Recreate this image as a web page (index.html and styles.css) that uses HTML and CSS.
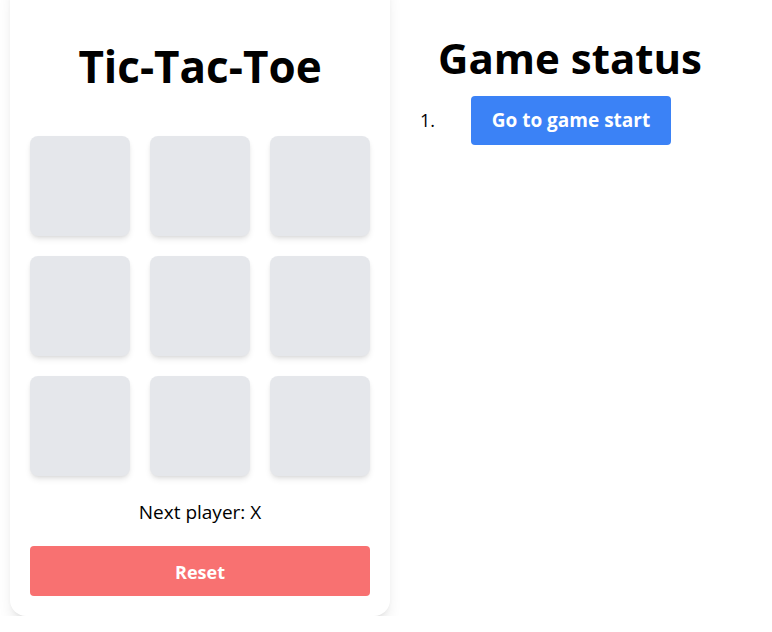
FILE: index.html
```html
<!DOCTYPE html>
<html lang="en">
<head>
<meta charset="utf-8">
<title>Tic-Tac-Toe</title>
<link rel="stylesheet" href="styles.css">
</head>
<body>
<main class="layout">
  <section class="card">
    <h1 class="title">Tic-Tac-Toe</h1>
    <div class="board">
      <button class="cell"></button>
      <button class="cell"></button>
      <button class="cell"></button>
      <button class="cell"></button>
      <button class="cell"></button>
      <button class="cell"></button>
      <button class="cell"></button>
      <button class="cell"></button>
      <button class="cell"></button>
    </div>
    <p class="status">Next player: X</p>
    <button class="reset">Reset</button>
  </section>
  <section class="history">
    <h2 class="history-title">Game status</h2>
    <ol class="moves">
      <li class="move"><button class="move-btn">Go to game start</button></li>
    </ol>
  </section>
</main>
</body>
</html>
```
FILE: styles.css
```css
* { box-sizing: border-box; }
html, body { margin: 0; padding: 0; background: #fff; }
body {
  font-family: "Open Sans", "Noto Sans", "Liberation Sans", sans-serif;
  color: #000;
  overflow: hidden;
}
.layout {
  display: flex;
  align-items: flex-start;
  gap: 20px;
  padding-left: 10px;
}
.card {
  width: 380px;
  margin-top: -24px;
  padding: 20px;
  background: #fff;
  border-radius: 16px;
  box-shadow: 0 10px 15px -3px rgba(0,0,0,0.1), 0 4px 6px -4px rgba(0,0,0,0.1);
}
.title {
  margin: 48px 0 48px;
  font-size: 44px;
  line-height: 1;
  font-weight: 700;
  text-align: center;
}
.board {
  display: grid;
  grid-template-columns: repeat(3, 100px);
  grid-auto-rows: 100px;
  gap: 20px;
}
.cell {
  border: 0;
  padding: 0;
  background: #e5e7eb;
  border-radius: 8px;
  box-shadow: 0 4px 6px -1px rgba(0,0,0,0.1), 0 2px 4px -2px rgba(0,0,0,0.1);
}
.status {
  margin: 22px 0 20px;
  font-size: 19px;
  line-height: 28px;
  text-align: center;
}
.reset {
  display: block;
  width: 100%;
  height: 50px;
  padding: 2px 0 0;
  border: 0;
  border-radius: 4px;
  background: #f87171;
  color: #fff;
  font-family: inherit;
  font-size: 18px;
  font-weight: 700;
}
.history {
  width: 320px;
}
.history-title {
  margin: 37px 0 0;
  font-size: 42px;
  line-height: 1;
  font-weight: 700;
  text-align: center;
}
.moves {
  margin: 17px 0 0;
  padding: 0 0 0 10px;
  list-style: decimal inside;
  font-size: 18px;
}
.move-btn {
  margin-left: 31px;
  padding: 12px 21px;
  border: 0;
  border-radius: 4px;
  background: #3b82f6;
  color: #fff;
  font-family: inherit;
  font-size: 19px;
  line-height: 25px;
  font-weight: 700;
}
```
